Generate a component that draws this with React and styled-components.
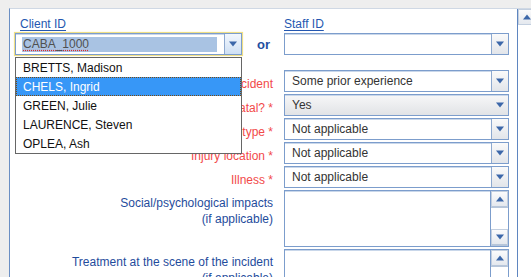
import React from "react";
import styled, { createGlobalStyle, css } from "styled-components";

const Global = createGlobalStyle`
  html, body { margin: 0; padding: 0; background: #eeeeee; overflow: hidden; }
  body { font-family: "Liberation Sans", Arial, sans-serif; font-size: 12px; }
`;

const Screen = styled.div`
  width: 531px;
  height: 277px;
  box-sizing: border-box;
  padding: 8px 0 0 9px;
  background: #eeeeee;
  overflow: hidden;
`;

const ScrollPane = styled.div`
  display: flex;
  height: 269px;
  border-top: 1px solid #cfd8e4;
  border-left: 1px solid #6b8fc4;
`;

const Viewport = styled.div`
  position: relative;
  width: 503px;
  flex: none;
  background: #ffffff;
  border-right: 1px solid #5f86c0;
  padding: 8px 4px 0 0;
  box-sizing: content-box;
  display: flex;
  flex-direction: column;
  overflow: hidden;
`;

const PageScrollbar = styled.div`
  width: 17px;
  flex: none;
  background: #ffffff;
  display: flex;
  flex-direction: column;
`;

const ScrollButton = styled.div`
  height: ${(p) => p.$h || 16}px;
  flex: none;
  box-sizing: border-box;
  display: flex;
  align-items: center;
  justify-content: center;
  background: linear-gradient(#fbfbfc, #e4e8ee);
  border: 1px solid #c3cfdf;
  ${(p) => p.$bottomLine && css`border-bottom: 2px solid #b7c6da;`}
`;

const Track = styled.div`
  flex: 1;
  background: #ffffff;
`;

const Row = styled.div`
  display: grid;
  grid-template-columns: 263px 225px;
  column-gap: 11px;
  flex: none;
  margin-top: ${(p) => p.$mt || 0}px;
`;

const HeadLabel = styled.span`
  display: block;
  line-height: 15px;
  height: 15px;
  color: #2457b0;
  text-decoration: underline;
  text-underline-offset: 2px;
  padding-left: ${(p) => p.$indent || 0}px;
`;

const LeftCell = styled.div`
  display: flex;
  align-items: center;
`;

const FocusRing = styled.div`
  margin-left: 4px;
  border: 1px solid #efdf86;
  box-shadow: 0 0 1px #f5eab0;
`;

const ComboBox = styled.div`
  display: flex;
  box-sizing: border-box;
  width: ${(p) => p.$w || 225}px;
  height: 22px;
  border: 1px solid #7c9dcc;
  background: ${(p) =>
    p.$button ? "linear-gradient(#f7f7f8, #e1e3e6)" : "#ffffff"};
  box-shadow: inset 0 1px 0 #c9d7ea;
  align-self: center;
`;

const ComboText = styled.div`
  flex: 1;
  padding-left: 7px;
  line-height: 20px;
  color: #333333;
  white-space: nowrap;
  overflow: hidden;
`;

const Selection = styled.div`
  flex: 1;
  margin: 3px 7px 2px 6px;
  background: #a9c3e3;
  color: #505050;
  line-height: 15px;
  padding-left: 1px;
`;

const Misspelled = styled.span`
  text-decoration: underline dotted #e02828;
  text-underline-offset: 2px;
`;

const ArrowButton = styled.div`
  width: 16px;
  flex: none;
  display: flex;
  align-items: center;
  justify-content: center;
  ${(p) =>
    !p.$plain &&
    css`
      border-left: 1px solid #8ea9cf;
      background: ${p.$focused
        ? "linear-gradient(#f2f7fd, #cfe0f4)"
        : "linear-gradient(#fafafa, #e2e5ea)"};
    `}
`;

const Or = styled.span`
  margin-left: 14px;
  font-size: 13px;
  font-weight: bold;
  color: #1f4f9f;
`;

const FieldLabel = styled.div`
  text-align: right;
  line-height: 16px;
  padding-top: ${(p) => (p.$multi ? 5 : 6)}px;
  color: ${(p) => (p.$required ? "#f24a4a" : "#1f4c9c")};
  white-space: nowrap;
`;

const TextArea = styled.div`
  display: flex;
  box-sizing: border-box;
  height: 57px;
  border: 1px solid #7c9dcc;
  background: #ffffff;
  box-shadow: inset 0 1px 0 #c9d7ea;
`;

const TextBody = styled.div`
  flex: 1;
`;

const InnerScroll = styled.div`
  width: 17px;
  flex: none;
  display: flex;
  flex-direction: column;
  border-left: 1px solid #7c9dcc;
`;

const Popup = styled.div`
  position: absolute;
  left: 5px;
  top: 48px;
  width: 227px;
  box-sizing: border-box;
  background: #ffffff;
  border: 1px solid #666666;
  z-index: 5;
`;

const PopupItem = styled.div`
  height: 19px;
  box-sizing: border-box;
  line-height: 18px;
  padding-left: 6px;
  color: ${(p) => (p.$selected ? "#ffffff" : "#111111")};
  background: ${(p) => (p.$selected ? "#3797f7" : "#ffffff")};
  border: 1px ${(p) => (p.$selected ? "dotted #7a4a10" : "solid transparent")};
`;

const Down = ({ color = "#3c67a9" }) => (
  <svg width="8" height="6" viewBox="0 0 8 6">
    <path d="M0 0.5 H8 L4 5.5 Z" fill={color} />
  </svg>
);

const Up = ({ color = "#3c67a9" }) => (
  <svg width="8" height="6" viewBox="0 0 8 6">
    <path d="M0 5.5 H8 L4 0.5 Z" fill={color} />
  </svg>
);

const Combo = ({ value, button }) => (
  <ComboBox $button={button}>
    <ComboText>{value}</ComboText>
    <ArrowButton $plain={button}>
      <Down />
    </ArrowButton>
  </ComboBox>
);

const Area = () => (
  <TextArea>
    <TextBody />
    <InnerScroll>
      <ScrollButton $h={17} $bottomLine>
        <Up />
      </ScrollButton>
      <Track />
      <ScrollButton $h={17} $bottomLine>
        <Down />
      </ScrollButton>
    </InnerScroll>
  </TextArea>
);

const clients = [
  "BRETTS, Madison",
  "CHELS, Ingrid",
  "GREEN, Julie",
  "LAURENCE, Steven",
  "OPLEA, Ash",
];

const fields = [
  { label: "Experience prior to the incident", value: "Some prior experience" },
  { label: "Was the incident fatal? *", value: "Yes", button: true },
  { label: "Injury type *", value: "Not applicable" },
  { label: "Injury location *", value: "Not applicable" },
  { label: "Illness *", value: "Not applicable" },
];

export default function App() {
  return (
    <Screen>
      <Global />
      <ScrollPane>
        <Viewport>
          <Row>
            <HeadLabel $indent={10}>Client ID</HeadLabel>
            <HeadLabel>Staff ID</HeadLabel>
          </Row>
          <Row>
            <LeftCell>
              <FocusRing>
                <ComboBox $w={227}>
                  <Selection>
                    <Misspelled>CABA_1000</Misspelled>
                  </Selection>
                  <ArrowButton $focused>
                    <Down />
                  </ArrowButton>
                </ComboBox>
              </FocusRing>
              <Or>or</Or>
            </LeftCell>
            <Combo value="" />
          </Row>
          {fields.map((f, i) => (
            <Row key={f.label} $mt={i === 0 ? 14 : 2}>
              <FieldLabel $required>{f.label}</FieldLabel>
              <Combo value={f.value} button={f.button} />
            </Row>
          ))}
          <Row $mt={2}>
            <FieldLabel $multi>
              Social/psychological impacts
              <br />
              (if applicable)
            </FieldLabel>
            <Area />
          </Row>
          <Row $mt={2}>
            <FieldLabel $multi>
              Treatment at the scene of the incident
              <br />
              (if applicable)
            </FieldLabel>
            <Area />
          </Row>
          <Popup>
            {clients.map((c) => (
              <PopupItem key={c} $selected={c === "CHELS, Ingrid"}>
                {c}
              </PopupItem>
            ))}
          </Popup>
        </Viewport>
        <PageScrollbar>
          <ScrollButton $h={16}>
            <Up />
          </ScrollButton>
          <Track />
        </PageScrollbar>
      </ScrollPane>
    </Screen>
  );
}
